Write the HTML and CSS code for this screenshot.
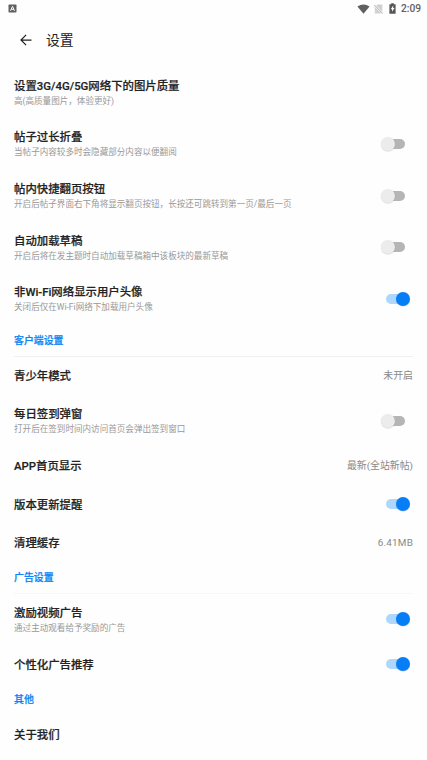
FILE: index.html
```html
<!DOCTYPE html>
<html lang="zh-CN">
<head>
<meta charset="utf-8">
<title>设置</title>
<link rel="stylesheet" href="styles.css">
</head>
<body>
<div class="statusbar">
  <svg class="app-icon" width="9" height="9" viewBox="0 0 9 9"><rect x=".5" y=".5" width="8" height="8" rx=".8" fill="#606060"/><path d="M2.5 6.8 4.5 2.3 6.5 6.8M3.3 5.3h2.4" fill="none" stroke="#fff" stroke-width="1"/></svg>
  <div class="status-right">
    <svg class="wifi" width="13" height="10" viewBox="0 0 13 10"><path d="M.4 2.5Q6.5-1.7 12.6 2.5L6.5 9.8Z" fill="#606060"/></svg>
    <svg class="sim" width="9" height="10" viewBox="0 0 9 10"><path d="M3.4.5H8.3V9.5H.8V3.2Z" fill="#d0d0d0"/><path d="M.2.8 8.8 9.6" stroke="#fff" stroke-width="1.8"/><path d="M.2.8 8.8 9.6" stroke="#a0a0a0" stroke-width=".9"/></svg>
    <svg class="battery" width="7" height="11" viewBox="0 0 7 11"><path d="M2.2.3h2.6v1H6.6v9.4H.4V1.3h1.8Z" fill="#555"/><path d="M4.2 2.5 1.7 6.2h1.4v2.6l2.4-3.7H4.2Z" fill="#fff"/></svg>
    <span class="clock">2:09</span>
  </div>
</div>
<header class="appbar">
  <svg width="12" height="12" viewBox="0 0 12 12"><path d="M6.1.9 1 6l5.1 5.1M1.2 6h10.3" fill="none" stroke="#222" stroke-width="1.25"/></svg>
  <h1>设置</h1>
</header>
<main>
  <div class="row tall"><div><div class="title">设置3G/4G/5G网络下的图片质量</div><div class="desc">高(高质量图片，体验更好)</div></div></div>
  <div class="row tall"><div><div class="title">帖子过长折叠</div><div class="desc">当帖子内容较多时会隐藏部分内容以便翻阅</div></div><i class="switch"></i></div>
  <div class="row tall"><div><div class="title">帖内快捷翻页按钮</div><div class="desc">开启后帖子界面右下角将显示翻页按钮，长按还可跳转到第一页/最后一页</div></div><i class="switch"></i></div>
  <div class="row tall"><div><div class="title">自动加载草稿</div><div class="desc">开启后将在发主题时自动加载草稿箱中该板块的最新草稿</div></div><i class="switch"></i></div>
  <div class="row tall"><div><div class="title">非Wi-Fi网络显示用户头像</div><div class="desc">关闭后仅在Wi-Fi网络下加载用户头像</div></div><i class="switch on"></i></div>
  <h2>客户端设置</h2>
  <div class="row"><div class="title">青少年模式</div><span class="value">未开启</span></div>
  <div class="row tall"><div><div class="title">每日签到弹窗</div><div class="desc">打开后在签到时间内访问首页会弹出签到窗口</div></div><i class="switch"></i></div>
  <div class="row"><div class="title">APP首页显示</div><span class="value">最新(全站新帖)</span></div>
  <div class="row"><div class="title">版本更新提醒</div><i class="switch on"></i></div>
  <div class="row"><div class="title">清理缓存</div><span class="value size">6.41MB</span></div>
  <h2 class="faint">广告设置</h2>
  <div class="row tall"><div><div class="title">激励视频广告</div><div class="desc">通过主动观看给予奖励的广告</div></div><i class="switch on"></i></div>
  <div class="row"><div class="title">个性化广告推荐</div><i class="switch on"></i></div>
  <h2 class="plain">其他</h2>
  <div class="row"><div class="title">关于我们</div></div>
</main>
</body>
</html>
```
FILE: styles.css
```css
* { box-sizing: border-box; }
body {
  margin: 0;
  height: 760px;
  overflow: hidden;
  background: #fefefe;
  color: #222;
  font-family: Roboto, "Noto Sans CJK SC", sans-serif;
  white-space: nowrap;
}
svg { display: block; flex: none; }
.statusbar {
  height: 17px;
  padding: 0 6px 0 8px;
  display: flex;
  align-items: center;
  justify-content: space-between;
}
.status-right { display: flex; align-items: center; }
.sim { margin-left: 4px; }
.battery { margin-left: 6px; }
.clock { margin-left: 5px; font-size: 10.2px; font-weight: 500; line-height: 16px; color: #606060; }
.appbar {
  height: 46px;
  padding-left: 20px;
  display: flex;
  align-items: center;
  gap: 14px;
}
h1 { margin: 0; font-size: 13.8px; font-weight: 400; line-height: 20px; }
main { padding: 3.8px 14px 0 14px; }
.row {
  height: 38.5px;
  display: flex;
  align-items: center;
  justify-content: space-between;
}
.tall { height: 51.7px; }
.title { font-size: 11.4px; font-weight: 500; line-height: 16px; -webkit-text-stroke: .2px #222; }
.desc { font-size: 8.57px; line-height: 14px; color: #999; }
.value { font-size: 9.9px; line-height: 16px; color: #888; }
.size { letter-spacing: .2px; }
h2 {
  margin: 0;
  height: 31.5px;
  border-bottom: 1px solid #f0f0f0;
  font-size: 9.9px;
  font-weight: 500;
  line-height: 32px;
  color: #0b86f5;
  -webkit-text-stroke: .25px #0b86f5;
}
.faint { border-color: #f7f7f7; }
.plain { border-color: transparent; }
.switch {
  position: relative;
  flex: none;
  width: 22px;
  height: 10px;
  margin: 0 8px 1px 0;
  border-radius: 5px;
  background: #b5b5b5;
}
.switch::after {
  content: "";
  position: absolute;
  left: -2px;
  top: -2px;
  width: 14px;
  height: 14px;
  border-radius: 50%;
  background: #ececec;
  box-shadow: 0 .5px 1px rgba(0, 0, 0, .18);
}
.on { margin-right: 5px; background: #add7fd; }
.on::after { left: 10px; background: #087ef6; }
```
